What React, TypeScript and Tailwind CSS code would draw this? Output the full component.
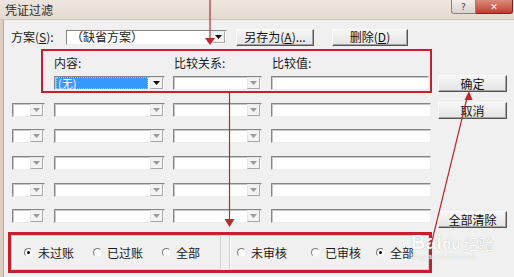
import React from 'react';

const font = 'font-["Noto_Sans_CJK_SC","Noto_Sans",sans-serif]';

function Arrow({ dark }: { dark?: boolean }) {
  return (
    <div className="ml-auto mr-px w-[13px] h-[12px] bg-[#f3f3f3] border border-t-[#e8e8e8] border-l-[#e8e8e8] border-b-[#a8a8a8] border-r-[#a8a8a8] flex items-center justify-center">
      <svg width="7" height="4" viewBox="0 0 7 4">
        <path d="M0 0h7L3.5 4z" fill={dark ? '#111' : '#9a9a9a'} />
      </svg>
    </div>
  );
}

function Field({ w, combo, dark, children }: { w: string; combo?: boolean; dark?: boolean; children?: React.ReactNode }) {
  return (
    <div className={`${w} h-[14px] shrink-0 bg-white border border-t-[#858585] border-l-[#858585] border-b-[#eeeeee] border-r-[#eeeeee] shadow-[inset_1px_1px_0_#c6c6c6] flex items-center`}>
      {children}
      {combo && <Arrow dark={dark} />}
    </div>
  );
}

function Btn({ w, children }: { w: string; children: React.ReactNode }) {
  return (
    <div className={`${w} h-[17px] shrink-0 flex items-center justify-center bg-linear-to-b from-[#f6f6f6] to-[#e4e4e4] border border-t-[#fafafa] border-l-[#fafafa] border-b-[#555] border-r-[#555] shadow-[inset_-1px_-1px_0_#a4a4a4] text-[12px] leading-[12px] text-[#111]`}>
      {children}
    </div>
  );
}

function Radio({ on, label, w }: { on?: boolean; label: string; w: string }) {
  return (
    <div className={`${w} flex items-center gap-[5px]`}>
      <div className="w-[9px] h-[9px] rounded-full bg-white border border-t-[#7c7c7c] border-l-[#7c7c7c] border-b-[#f4f4f4] border-r-[#f4f4f4] flex items-center justify-center">
        {on && <div className="w-[3px] h-[3px] rounded-full bg-[#111]" />}
      </div>
      <span className="text-[12px] leading-[12px] text-[#1a1a1a]">{label}</span>
    </div>
  );
}

const rowTops = ['mt-[10px]', 'mt-[12px]', 'mt-[13px]', 'mt-[13px]', 'mt-[12px]'];

export default function App() {
  return (
    <div className={`w-[514px] h-[277px] relative overflow-hidden bg-[#f0f0f0] ${font}`}>
      {/* title bar */}
      <div className="h-[20px] flex items-start bg-linear-to-b from-[#eee6de] to-[#e3dad1] border-b border-[#cfc4b9]">
        <span className="ml-[5px] mt-[4px] text-[12px] leading-[12px] text-[#2a2a2a]">凭证过滤</span>
        <div className="ml-auto mr-px flex">
          <div className="w-[25px] h-[14px] bg-linear-to-b from-[#f2efec] to-[#d9d3cd] border border-t-0 border-[#8b8178] rounded-bl-[3px] flex items-center justify-center">
            <span className="text-[9px] leading-[10px] text-[#444] font-['DejaVu_Sans',sans-serif]">?</span>
          </div>
          <div className="w-[37px] h-[14px] bg-linear-to-b from-[#d98a7e] to-[#c2392c] border border-t-0 border-l-0 border-[#7a2a22] rounded-br-[3px] flex items-center justify-center">
            <span className="text-[9px] leading-[10px] font-bold text-white font-['DejaVu_Sans',sans-serif]">✕</span>
          </div>
        </div>
      </div>

      <div className="flex h-[257px]">
        <div className="w-[4px] bg-[#dccfc2] border-r border-[#b6aa9e] shrink-0" />
        <div className="flex-1 flex flex-col">
          {/* 方案 row */}
          <div className="mt-[8px] h-[18px] flex items-center">
            <span className="ml-[7px] w-[55px] text-[12px] leading-[12px] text-[#1a1a1a]">方案(<u>S</u>):</span>
            <div className="w-[161px] h-[15px] bg-white border border-t-[#858585] border-l-[#858585] border-b-[#eeeeee] border-r-[#eeeeee] flex items-center">
              <span className="ml-[4px] text-[12px] leading-[12px] text-[#222]">（缺省方案）</span>
              <Arrow dark />
            </div>
            <div className="ml-[9px]"><Btn w="w-[78px]">另存为(<u>A</u>)...</Btn></div>
            <div className="ml-[18px]"><Btn w="w-[76px]">删除(<u>D</u>)</Btn></div>
          </div>

          <div className="mt-[3px] flex">
            {/* left column */}
            <div className="ml-[4px] w-[424px] flex flex-col">
              <div className="ml-[33px] w-[391px] h-[44px] border-2 border-[#c8202a] pl-[11px] pt-[6px]">
                <div className="flex text-[12px] leading-[12px] text-[#1a1a1a]">
                  <span className="w-[120px]">内容:</span>
                  <span className="w-[98px]">比较关系:</span>
                  <span>比较值:</span>
                </div>
                <div className="mt-[7px] flex">
                  <Field w="w-[111px]" combo dark>
                    <div className="ml-px w-[92px] h-[12px] bg-[#3399ff] outline outline-1 outline-dotted outline-[#9cc8f4] -outline-offset-1 flex items-center">
                      <span className="ml-[2px] text-[11px] leading-[11px] text-white">(无)</span>
                    </div>
                  </Field>
                  <div className="ml-[8px]"><Field w="w-[89px]" combo /></div>
                  <div className="ml-[9px]"><Field w="w-[158px]" /></div>
                </div>
              </div>

              {rowTops.map((mt, i) => (
                <div key={i} className={`${mt} flex`}>
                  <div className="ml-[4px]"><Field w="w-[33px]" combo /></div>
                  <div className="ml-[9px]"><Field w="w-[111px]" combo /></div>
                  <div className="ml-[8px]"><Field w="w-[89px]" combo /></div>
                  <div className="ml-[9px]"><Field w="w-[160px]" /></div>
                </div>
              ))}

              <div className="mt-[9px] w-[424px] h-[41px] border-[3px] border-[#c8202a] flex">
                <div className="w-[210px] h-[35px] border border-[#d2d2d2] shadow-[inset_1px_1px_0_#fff] flex items-center pl-[12px]">
                  <Radio on label="未过账" w="w-[69px]" />
                  <Radio label="已过账" w="w-[69px]" />
                  <Radio label="全部" w="w-[50px]" />
                </div>
                <div className="ml-[8px] w-[200px] h-[35px] border border-[#d2d2d2] shadow-[inset_1px_1px_0_#fff] flex items-center pl-[7px]">
                  <Radio label="未审核" w="w-[74px]" />
                  <Radio label="已审核" w="w-[65px]" />
                  <Radio on label="全部" w="w-[50px]" />
                </div>
              </div>
            </div>

            {/* right column */}
            <div className="ml-[6px] flex flex-col">
              <div className="mt-[26px]"><Btn w="w-[69px]">确定</Btn></div>
              <div className="mt-[10px]"><Btn w="w-[69px]">取消</Btn></div>
              <div className="mt-[92px]"><Btn w="w-[69px]">全部清除</Btn></div>
            </div>
          </div>
        </div>
      </div>

      {/* watermark */}
      <div className="absolute left-[411px] top-[232px] pointer-events-none select-none flex flex-col items-start opacity-90">
        <div className="flex items-end text-white [text-shadow:0_0_1px_#9a9a9a]">
          <span className="text-[20px] leading-[20px] font-bold font-['Liberation_Sans',sans-serif]">Bai</span>
          <span className="text-[15px] leading-[17px] font-bold font-['Liberation_Sans',sans-serif]">du</span>
          <span className="ml-[3px] text-[15px] leading-[17px]">经验</span>
        </div>
        <span className="mt-px text-[8px] leading-[8px] text-white [text-shadow:0_0_1px_#b0b0b0] font-['Liberation_Sans',sans-serif]">jingyan.baidu.com</span>
      </div>

      {/* red arrows */}
      <svg className="absolute inset-0 pointer-events-none" width="514" height="277">
        <line x1="210" y1="0" x2="210" y2="40" stroke="#c0282f" strokeWidth="1.2" />
        <path d="M205 38h10l-5 7z" fill="#c0282f" />
        <line x1="229.5" y1="93" x2="229.5" y2="221" stroke="#c0282f" strokeWidth="1.2" />
        <path d="M224.5 219h10l-5 8z" fill="#c0282f" />
        <line x1="431" y1="245" x2="467" y2="98" stroke="#c0282f" strokeWidth="1.2" />
        <path d="M469 91l3.5 9h-8z" fill="#c0282f" />
      </svg>
    </div>
  );
}
